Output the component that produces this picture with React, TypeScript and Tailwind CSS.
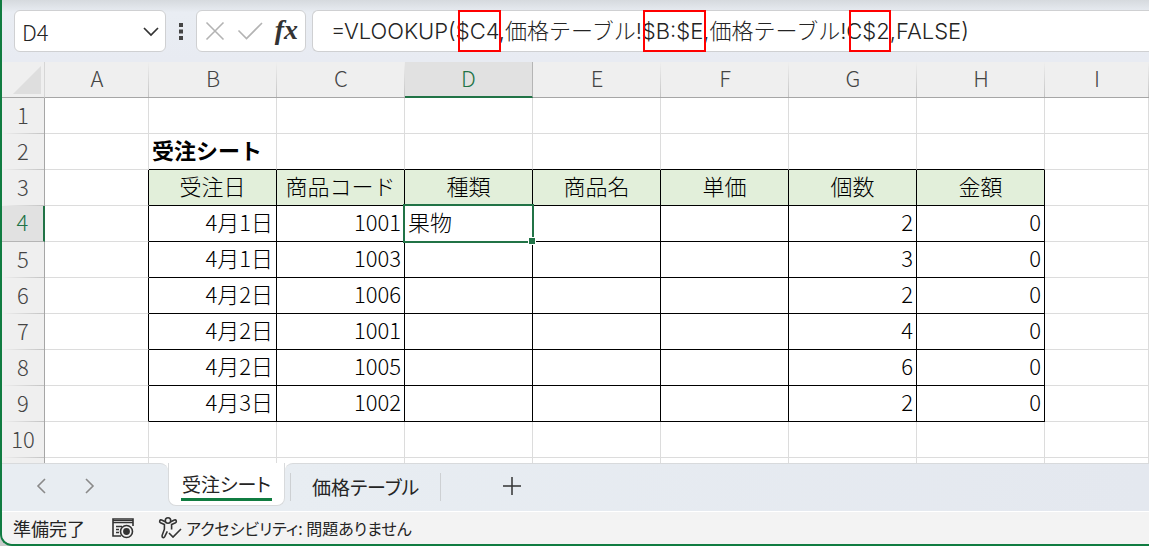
import clsx from "clsx";

const columns = ["A", "B", "C", "D", "E", "F", "G", "H", "I"];

const headings = ["受注日", "商品コード", "種類", "商品名", "単価", "個数", "金額"];

const orders = [
  ["4月1日", "1001", "果物", "", "", "2", "0"],
  ["4月1日", "1003", "", "", "", "3", "0"],
  ["4月2日", "1006", "", "", "", "2", "0"],
  ["4月2日", "1001", "", "", "", "4", "0"],
  ["4月2日", "1005", "", "", "", "6", "0"],
  ["4月3日", "1002", "", "", "", "2", "0"],
];

// sheet rows 1-10, each holding the values of columns A-I
const rows = [
  [],
  ["", "受注シート"],
  ["", ...headings],
  ...orders.map((order) => ["", ...order]),
  [],
];

function FormulaBar() {
  return (
    <div className="flex h-[62px] items-start bg-linear-to-b from-[#d6dade] via-[#e9edf3] via-20% to-[#e8ebf2] pt-[10px] pl-3">
      <div className="flex h-[42px] w-[152px] shrink-0 items-center rounded-md border border-[#cfd0d2] bg-white pr-[5px] pl-[7px]">
        <input
          aria-label="名前ボックス"
          className="w-full min-w-0 text-[22px] leading-8 text-[#242424] outline-none"
          defaultValue="D4"
        />
        <button aria-label="名前の一覧" className="shrink-0">
          <svg width="18" height="18" viewBox="0 0 18 18" fill="none" stroke="#333" strokeWidth="1.7">
            <path d="M2 6l7 7 7-7" />
          </svg>
        </button>
      </div>

      <svg className="mx-[13px] mt-[13px] shrink-0" width="4" height="18" viewBox="0 0 4 18" fill="#444">
        <path d="M0 0h4v4H0zM0 6.5h4v4H0zM0 13h4v4H0z" />
      </svg>

      <div className="flex h-[42px] w-[110px] shrink-0 items-center justify-between rounded-md border border-[#cfd0d2] bg-white pr-[7px] pl-2">
        <button aria-label="キャンセル">
          <svg width="20" height="20" viewBox="0 0 20 20" fill="none" stroke="#b3b3b3" strokeWidth="1.6">
            <path d="M1.5 1.5l17 17M18.5 1.5l-17 17" />
          </svg>
        </button>
        <button aria-label="入力">
          <svg width="26" height="20" viewBox="0 0 26 20" fill="none" stroke="#b3b3b3" strokeWidth="1.6">
            <path d="M1.5 9.5l8 8L25 2" />
          </svg>
        </button>
        <button
          aria-label="関数の挿入"
          className="pb-0.5 font-['Liberation_Serif',serif] text-[28px] leading-8 font-bold text-[#333] italic"
        >
          fx
        </button>
      </div>

      <div className="relative ml-[6px] h-[42px] min-w-0 flex-1">
        <input
          aria-label="数式バー"
          className="h-full w-full rounded-l-md border border-r-0 border-[#cfd0d2] bg-white pb-1 pl-[18px] font-[Inter,'Noto_Sans_CJK_JP',sans-serif] text-[22px] text-[#242424] outline-none"
          defaultValue="=VLOOKUP($C4,価格テーブル!$B:$E,価格テーブル!C$2,FALSE)"
        />
        <span className="absolute top-0 left-[146px] h-full w-[43px] border-2 border-[#ff0000]" />
        <span className="absolute top-0 left-[331px] h-full w-[63px] border-2 border-[#ff0000]" />
        <span className="absolute top-0 left-[537px] h-full w-[42px] border-2 border-[#ff0000]" />
      </div>
    </div>
  );
}

function Cell({ row, col, value }: { row: number; col: number; value: string }) {
  const inTable = row >= 3 && row <= 9 && col >= 1 && col <= 7;
  // a cell draws its right and bottom edge, so the table frame starts one cell early
  const blackRight = row >= 3 && row <= 9 && col <= 7;
  const blackBottom = row >= 2 && row <= 9 && col >= 1 && col <= 7;
  const selected = row === 4 && col === 3;

  return (
    <td
      className={clsx(
        "border-r border-b px-[3px] pt-0 pb-[5px] whitespace-nowrap text-black",
        blackRight ? "border-r-black" : "border-r-[#dcdcdc]",
        blackBottom ? "border-b-black" : "border-b-[#dcdcdc]",
        row === 3 && inTable && "bg-[#e2efda] text-center",
        row > 3 && (col === 3 ? "text-left" : "text-right"),
        row === 2 && "font-bold",
        selected && "relative"
      )}
    >
      {value}
      {selected && (
        <>
          <span className="absolute -inset-0.5 border-2 border-[#217346]" />
          <span className="absolute -right-1 -bottom-1 size-[8px] border border-white bg-[#217346]" />
        </>
      )}
    </td>
  );
}

function Sheet() {
  return (
    <table className="w-full table-fixed border-separate border-spacing-0 bg-white text-[22px] leading-6">
      <colgroup>
        <col className="w-[43px]" />
        <col className="w-[104px]" />
        {headings.map((heading) => (
          <col key={heading} className="w-[128px]" />
        ))}
        <col />
      </colgroup>
      <thead>
        <tr className="h-9 text-[#444]">
          <th aria-label="すべて選択" className="border-r border-b border-r-[#d6d6d6] border-b-[#a6a6a6] bg-[#efefef] p-0">
            <svg className="mr-[3px] ml-auto" width="28" height="28" viewBox="0 0 28 28" fill="#dedede">
              <path d="M28 0v28H0z" />
            </svg>
          </th>
          {columns.map((name) => (
            <th
              key={name}
              scope="col"
              className={clsx(
                "px-0 pt-0 pb-[5px] font-light",
                name === "D"
                  ? "border-r border-b-2 border-r-[#b5b5b5] border-b-[#217346] bg-[#e1e1e1] text-[#217346]"
                  : "border-b border-b-[#a6a6a6] bg-[#efefef] bg-linear-to-b from-[#efefef] to-[#c4c4c4] bg-[size:1px_100%] bg-right bg-no-repeat"
              )}
            >
              {name}
            </th>
          ))}
        </tr>
      </thead>
      <tbody>
        {rows.map((values, i) => (
          <tr key={i} className="h-9">
            <th
              scope="row"
              className={clsx(
                "px-0 pt-0 pb-[5px] font-light",
                i === 3
                  ? "border-r-2 border-b border-r-[#217346] border-b-[#b5b5b5] bg-[#e1e1e1] text-[#217346]"
                  : "border-r border-r-[#a6a6a6] bg-[#efefef] bg-linear-to-r from-[#efefef] to-[#c4c4c4] bg-[size:100%_1px] bg-bottom bg-no-repeat text-[#444]"
              )}
            >
              {i + 1}
            </th>
            {columns.map((name, col) => (
              <Cell key={name} row={i + 1} col={col} value={values[col] ?? ""} />
            ))}
          </tr>
        ))}
        <tr className="h-[5px]">
          <th className="border-r border-r-[#a6a6a6] bg-[#efefef] p-0" />
          {columns.map((name) => (
            <td key={name} className="border-r border-r-[#dcdcdc] p-0" />
          ))}
        </tr>
      </tbody>
    </table>
  );
}

function SheetTabs() {
  return (
    <nav className="flex h-12 bg-[#e8edf2] text-[19px] leading-7 font-normal text-[#242424] [font-feature-settings:'palt']">
      <div className="bg-white">
        <div className="flex h-full w-[166px] items-center gap-[30px] rounded-tr-lg border-t border-[#d8dadc] bg-[#e8edf2] pb-1 pl-[30px] text-[#8a8a8a]">
          <button aria-label="前のシート">
            <svg width="18" height="18" viewBox="0 0 18 18" fill="none" stroke="currentColor" strokeWidth="1.6">
              <path d="M13 2L6 9l7 7" />
            </svg>
          </button>
          <button aria-label="次のシート">
            <svg width="18" height="18" viewBox="0 0 18 18" fill="none" stroke="currentColor" strokeWidth="1.6">
              <path d="M6 2l7 7-7 7" />
            </svg>
          </button>
        </div>
      </div>
      <a href="#orders" className="h-[43px] rounded-b-lg border border-t-0 border-[#d8dadc] bg-white px-3 pt-[7px]">
        <span className="block border-b-3 border-[#107c41] px-px">受注シート</span>
      </a>
      <div className="min-w-0 flex-1 bg-white">
        <div className="flex h-full items-start rounded-tl-lg border-t border-[#d8dadc] bg-linear-to-r from-[#e8edf2] to-[#e4e8ef] pt-[9px] pl-[5px]">
          <a href="#prices" className="border-x border-[#cdd0d3] px-[21px]">
            価格テーブル
          </a>
          <button aria-label="新しいシート" className="ml-[62px] pt-1">
            <svg width="18" height="18" viewBox="0 0 18 18" fill="none" stroke="#333" strokeWidth="1.5">
              <path d="M9 0v18M0 9h18" />
            </svg>
          </button>
        </div>
      </div>
    </nav>
  );
}

function StatusBar() {
  return (
    <footer className="flex h-[33px] items-center border-t border-white bg-[#f3f3f3] pl-[11px] text-[16px] leading-6 font-normal text-[#242424] [font-feature-settings:'palt']">
      <span className="text-[18px]">準備完了</span>
      <button aria-label="マクロの記録" className="ml-[26px]">
        <svg width="24" height="22" viewBox="0 0 24 22" fill="none" stroke="#333" strokeWidth="1.6">
          <path d="M10 19H2V2h20v7M2 5.5h20M5 9.5h6M5 12.5h3M5 15.5h3" />
          <path d="M2 3.5h20" strokeWidth="1.2" />
          <circle cx="15.5" cy="14.5" r="6" />
          <circle cx="15.5" cy="14.5" r="2.6" fill="#333" />
        </svg>
      </button>
      <button className="ml-[23px] flex items-center gap-1">
        <svg width="24" height="24" viewBox="0 0 24 24" fill="none" stroke="#333" strokeWidth="1.6">
          <circle cx="10" cy="4.5" r="2.7" />
          <path d="M7.3 5.8L3.6 4.1C1.8 3.4.8 5.8 2.5 6.7L6.4 8.6v4.6L4.1 19.6c-.5 1.9 1.7 2.7 2.6 1l2.6-5.2M12.7 5.8l3.7-1.7c1.8-.7 2.8 1.7 1.1 2.6l-3.9 1.9v5" />
          <path d="M11 17l4 4 8-8" />
        </svg>
        アクセシビリティ: 問題ありません
      </button>
    </footer>
  );
}

export default function App() {
  return (
    <div className="bg-[#c9cccb]">
      <div className="overflow-hidden rounded-bl-xl border-b-2 border-l-2 border-[#107c41] font-['Noto_Sans_CJK_JP',sans-serif] font-light">
        <FormulaBar />
        <Sheet />
        <SheetTabs />
        <StatusBar />
      </div>
    </div>
  );
}
